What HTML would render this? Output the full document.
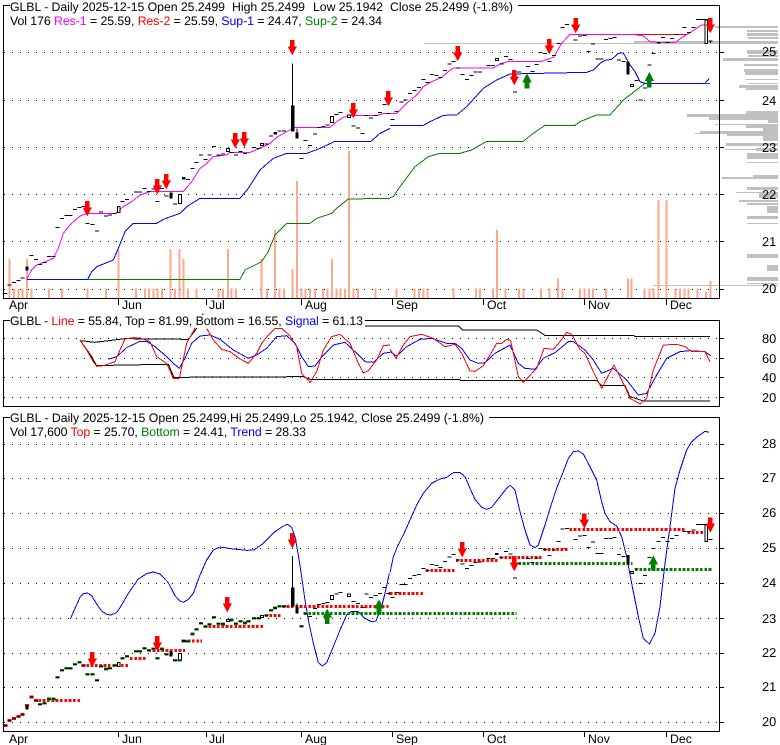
<!DOCTYPE html>
<html><head><meta charset="utf-8"><title>GLBL</title>
<style>
html,body{margin:0;padding:0;background:#fff;width:780px;height:745px;overflow:hidden}
svg{display:block}
text{font-family:"Liberation Sans",Arial,sans-serif;font-size:12.3px;fill:#000}
.a{font-size:12.8px}
.l{fill:none;stroke-width:3;stroke-linejoin:round}
</style></head><body>
<svg width="780" height="745" viewBox="0 0 780 745" shape-rendering="crispEdges">
<defs>
<polygon id="d" points="-7,0 7,0 7,19 14,19 0,46 -14,19 -7,19" fill="#f00"/>
<polygon id="u" points="0,0 14,27 7,27 7,46 -7,46 -7,27 -14,27" fill="#008000"/>
</defs>
<!-- volume profile -->
<path fill="#c0c0c0" d="M715 26H778V28H715zM747 30H778V32H747zM747 33H778V36H747zM748 37H778V39H748zM634 41H778V44H634zM424 43H634V44H424zM747 50H778V54H747zM748 55H778V57H748zM723 58H778V61H723zM744 64H778V66H744zM744 69H778V72H744zM745 72H778V75H745zM746 79H778V80H746zM748 83H778V84H748zM739 85H778V88H739zM746 88H778V90H746zM746 111H778V114H746zM687 114H778V117H687zM709 117H778V120H709zM768 120H778V123H768zM715 124H778V125H715zM746 124H778V128H746zM763 128H778V131H763zM700 131H778V134H700zM695 133H700V134H695zM727 134H778V136H727zM763 136H778V141H763zM726 143H778V146H726zM756 148H778V151H756zM725 149H756V150H725zM747 153H778V159H747zM747 162H778V163H747zM753 175H778V177H753zM722 177H778V179H722zM747 187H778V190H747zM736 192H778V193H736zM759 193H778V198H759zM739 200H778V202H739zM747 203H778V205H747zM767 206H778V213H767zM747 216H778V219H747zM747 223H778V224H747zM747 254H778V258H747zM767 265H778V271H767zM747 277H778V281H747zM747 283H778V284H747zM653 285H778V286H653z"/>
<!-- grids -->
<g stroke="#000" fill="none" stroke-width="1">
<path stroke-dasharray="1 7" d="M4 52.5H719M4 100.5H719M4 147.5H719M4 194.5H719M4 241.5H719M4 289.5H719M4 338.5H719M4 358.5H719M4 377.5H719M4 397.5H719M4 444.5H719M4 478.5H719M4 513.5H719M4 548.5H719M4 583.5H719M4 618.5H719M4 653.5H719M4 687.5H719M4 722.5H719"/>
<path d="M720 52.5h4M720 100.5h4M720 147.5h4M720 194.5h4M720 241.5h4M720 289.5h4M720 338.5h4M720 358.5h4M720 377.5h4M720 397.5h4M720 444.5h4M720 478.5h4M720 513.5h4M720 548.5h4M720 583.5h4M720 618.5h4M720 653.5h4M720 687.5h4M720 722.5h4"/>
<path d="M118.5 298v7M206.5 298v7M301.5 298v7M392.5 298v7M483.5 298v7M584.5 298v7M666.5 298v7M118.5 731v6M206.5 731v6M301.5 731v6M392.5 731v6M483.5 731v6M584.5 731v6M666.5 731v6"/>
</g>
<!-- volume bars -->
<g transform="scale(.33333)" fill="none" stroke="#ffa98c" stroke-width="6">
<path d="M29 777V894M42 865V894M55 865V894M68 865V894M81 777V894M95 865V894M147 865V894M186 865V894M263 865V894M318 865V894M356 750V894M408 865V894M435 865V894M447 865V894M460 865V894M473 865V894M486 865V894M512 747V894M525 865V894M538 747V894M551 777V894M564 865V894M590 865V894M656 865V894M669 865V894M684 747V894M695 865V894M708 865V894M785 777V894M801 865V894M825 690V894M839 865V894M852 865V894M878 807V894M891 543V894M905 865V894M917 865V894M930 865V894M945 865V894M969 865V894M983 865V894M996 777V894M1009 865V894M1022 865V894M1035 865V894M1047 453V894M1061 865V894M1074 865V894M1127 865V894"/>
</g>
<g transform="translate(390,0) scale(.33333)" fill="none" stroke="#ffa98c" stroke-width="6">
<path d="M20 865V894M74 865V894M87 865V894M100 865V894M113 865V894M191 865V894M258 865V894M270 865V894M309 865V894M321 690V894M347 865V894M387 865V894M401 865V894M453 865V894M479 865V894M504 835V894M518 865V894M570 865V894M583 865V894M597 865V894M609 865V894M648 865V894M714 835V894M725 835V894M764 865V894M778 865V894M791 865V894M806 600V894M830 600V894M857 865V894M870 865V894M883 865V894M896 865V894M923 865V894M948 875V894M962 843V894"/>
</g>
<!-- panel 1 left -->
<g transform="scale(.33333)">
<polyline class="l" stroke="#0000ff" points="81,838 263,838 275,815 290,800 340,780 355,745 375,695 400,670 470,670 490,658 540,640 560,620 600,595 720,595 745,565 780,510 820,475 860,460 920,460 960,445 1005,424 1113,424 1140,400 1170,385"/>
<polyline class="l" stroke="#008000" points="263,838 720,838 735,810 785,785 805,755 825,705 860,670 930,670 950,655 995,640 1010,625 1045,597 1170,595"/>
<polyline class="l" stroke="#ff00ff" points="81,836 95,810 110,795 130,788 160,775 175,745 190,700 210,675 240,648 260,641 345,641 370,620 395,605 420,585 450,575 550,574 575,545 600,505 620,490 640,470 680,465 690,457 750,457 780,445 810,430 830,412 860,395 885,382 990,382 1010,365 1030,352 1050,347 1130,347 1150,340 1170,340"/>
<path fill="none" stroke="#000" stroke-width="3" d="M10 880h12M23 855h12M36 847h12M49 842h12M62 834h12M89 766h12M102 778h12M114 793h12M128 787h12M141 770h12M154 770h12M167 682h12M180 655h12M193 646h12M206 646h12M219 628h12M232 622h12M245 620h12M257 670h12M272 673h12M285 693h12M297 636h12M312 648h12M324 645h12M337 640h12M362 605h12M375 598h12M402 576h12M414 576h12M428 565h12M441 574h12M454 567h12M467 604h12M480 566h12M493 588h12M519 612h12M558 538h12M571 505h12M584 487h12M597 465h12M610 478h12M623 465h12M636 440h12M650 465h12M663 462h12M689 457h12M702 465h12M716 455h12M729 460h12M756 442h12M769 445h12M794 432h12M807 408h12M833 393h12M846 393h12M899 475h12M911 422h12M924 436h12M939 402h12M951 383h12M964 380h12M977 375h12M1003 343h12M1016 338h12M1055 378h12M1068 384h12M1082 400h12M1094 347h12M1107 354h12M1121 347h12M1134 338h12M1147 313h12M1160 340h12M878 190V394M891 385V400"/>
<path fill="#000" d="M76 800h10v12h-10zM546 531h11v8h-11zM820 396h11v8h-11zM508 577h10v19h-10zM873 316h11v78h-11zM886 397h10v19h-10z"/>
<path fill="#fff" stroke="#000" stroke-width="3" d="M680 446h8v8h-8zM782 431h8v6h-8zM1043 345h8v7h-8zM353 620h7v18h-7zM536 584h8v26h-8zM992 350h8v17h-8z"/>
<use href="#d" x="262" y="603"/><use href="#d" x="472" y="537"/><use href="#d" x="499" y="522"/><use href="#d" x="706" y="399"/><use href="#d" x="733" y="396"/><use href="#d" x="877" y="120"/><use href="#d" x="1060" y="309"/><use href="#d" x="1165" y="273"/>
</g>
<!-- panel 1 right -->
<g transform="translate(390,0) scale(.33333)">
<polyline class="l" stroke="#008000" points="0,593 10,590 30,560 75,500 115,470 150,460 210,460 245,450 290,424 400,424 430,400 465,376 555,376 570,365 620,345 660,345 700,300 765,250 960,250"/>
<polyline class="l" stroke="#0000ff" points="0,376 100,376 120,365 160,346 200,345 230,320 280,265 320,240 360,222 590,217 610,210 630,190 645,181 665,178 685,160 700,159 720,195 735,215 750,245 765,250 945,250 958,235"/>
<polyline class="l" stroke="#ff00ff" points="0,340 20,340 50,310 80,285 100,260 125,245 155,232 175,215 190,204 310,204 330,192 355,184 455,184 490,172 515,130 540,103 730,103 760,108 780,125 810,128 855,128 880,110 905,95 935,75 960,75"/>
<path stroke="#f00" stroke-width="3" fill="none" d="M730 103H890"/>
<path fill="none" stroke="#000" stroke-width="3" d="M2 358h12M14 335h12M28 306h12M41 300h12M54 280h12M68 272h12M81 262h12M94 238h12M107 247h12M120 223h12M133 226h12M146 232h12M159 211h12M172 192h12M185 184h12M198 204h12M212 223h12M225 238h12M238 227h12M251 216h12M264 216h12M290 196h12M303 196h12M329 192h12M342 169h12M356 178h12M369 276h12M381 216h12M408 199h12M421 214h12M434 194h12M446 158h12M459 160h12M473 184h12M486 166h12M499 130h12M512 82h12M525 74h12M551 120h12M564 108h12M577 106h12M590 154h12M603 132h12M616 177h12M629 177h12M642 118h12M655 116h12M668 112h12M681 180h12M694 185h12M733 241h12M746 300h12M759 264h12M772 195h12M785 160h12M813 112h12M826 128h12M840 115h12M853 103h12M878 82h12M891 97h12M904 82h12M918 58H952M956 123h12M962 123v6"/>
<path fill="#000" d="M709 184h10v40h-10zM801 126h11v5h-11z"/>
<path fill="#fff" stroke="#000" stroke-width="3" d="M317 176h8v6h-8zM722 254h8v5h-8zM945 60h7v70h-7z"/>
<use href="#d" x="203" y="138"/><use href="#d" x="373" y="210"/><use href="#d" x="478" y="117"/><use href="#d" x="557" y="54"/><use href="#d" x="961" y="54"/>
<use href="#u" x="411" y="220"/><use href="#u" x="778" y="216"/>
</g>
<!-- panel 2 -->
<g transform="translate(0,300) scale(.33333)">
<polyline class="l" stroke="#000" points="240,122 285,127 375,116 565,118 590,85 610,40"/>
<polyline class="l" stroke="#000" points="240,120 275,170 290,197 372,195 505,193 522,232 910,230 930,238 1170,238"/>
<polyline class="l" stroke="#0000ff" points="325,178 350,170 380,143 420,124 440,124 465,140 500,170 520,190 538,205 555,175 575,130 600,108 630,105 660,118 700,150 745,175 770,165 800,145 830,110 860,107 885,130 905,170 925,200 945,198 970,165 1000,135 1035,127 1065,155 1095,185 1120,187 1150,160 1170,157"/>
<polyline class="l" stroke="#f00" points="240,120 260,150 280,185 290,199 310,197 345,185 360,150 375,117 400,113 420,114 450,125 470,170 500,190 520,235 538,235 560,130 585,85"/>
<polyline class="l" stroke="#f00" points="620,85 640,120 665,148 690,155 720,177 745,190 770,160 785,130 805,105 825,85 845,85 870,108 890,140 905,220 930,247 950,215 970,150 995,110 1020,103 1050,130 1075,190 1090,219 1105,212 1130,180 1150,137 1170,135"/>
<path stroke="#000" stroke-width="3" fill="none" d="M1095 78H1170"/>
</g>
<g transform="translate(390,300) scale(.33333)">
<polyline class="l" stroke="#000" points="0,78 205,78 218,90 440,90 465,106 730,106 735,109 960,109"/>
<polyline class="l" stroke="#000" points="0,238 210,238 210,241 620,241 635,257 705,257 720,290 760,303 960,303"/>
<polyline class="l" stroke="#0000ff" points="0,155 20,168 50,140 90,118 125,115 170,130 195,130 215,145 240,180 265,190 285,188 315,160 360,135 385,190 405,205 435,208 460,175 495,158 535,125 550,125 585,150 610,180 635,220 670,205 710,240 745,285 770,280 800,225 830,175 870,155 900,152 945,155 962,167"/>
<polyline class="l" stroke="#f00" points="0,147 18,175 40,135 60,110 95,103 130,115 165,140 195,133 215,160 240,213 255,214 280,197 300,165 320,130 335,130 350,118 362,122 385,230 400,247 440,205 462,145 490,148 510,125 530,97 545,103 570,148 585,160 610,215 635,265 672,195 705,260 720,295 750,312 770,295 790,210 820,135 860,133 885,140 905,155 945,155 960,185"/>
</g>
<!-- panel 3 left -->
<g transform="translate(0,430) scale(.33333)">
<polyline class="l" stroke="#0000ff" points="211,567 225,535 240,502 250,491 262,489 275,497 290,522 305,543 320,553 332,555 350,548 365,525 385,490 415,447 440,431 460,426 480,432 505,458 525,497 540,513 550,517 565,508 580,490 600,435 620,390 640,360 660,351 700,357 740,361 762,360 790,340 825,305 850,288 862,283 875,292 885,320 895,375 905,440 915,510 925,570 940,640 955,698 967,708 980,698 1000,650 1020,600 1040,555 1055,544 1075,545 1095,565 1115,575 1128,573 1145,530 1155,490 1168,430"/>
<path fill="none" stroke="#f00" stroke-width="9" stroke-dasharray="8 5" d="M115 811H243M246 706H384M390 685H438M445 661H555M550 633H606M612 589H789M795 556H843M847 529H1165M1165 490H1170"/>
<path fill="none" stroke="#008000" stroke-width="9" stroke-dasharray="8 5" d="M912 550H1170"/>
<path fill="none" stroke="#f00" stroke-width="9" d="M10 886h12M23 871h12M36 865h12M49 860h12M62 853h12M75 826h12M89 801h12M102 811h12M245 706h12"/>
<path fill="none" stroke="#008000" stroke-width="8" d="M114 823h12M128 820h12M141 807h12M154 807h12M167 742h12M180 721h12M193 715h12M206 715h12M219 703h12M232 697h12M257 733h12M272 733h12M285 751h12M297 709h12M312 717h12M324 715h12M337 706h12M362 685h12M375 679h12M402 664h12M414 664h12M428 655h12M441 661h12M454 656h12M467 685h12M480 657h12M493 673h12M519 691h12M533 690h12M545 633h12M558 634h12M571 612h12M584 598h12M597 580h12M610 590h12M623 583h12M636 562h12M650 581h12M663 582h12M678 572h12M689 570h12M702 581h12M716 574h12M729 579h12M740 574h12M756 565h12M769 565h12M794 556h12M807 541h12M819 534h12M833 529h12M846 529h12M899 589h12M911 550h12"/>
<path fill="none" stroke="#000" stroke-width="3" d="M10 886h12M23 871h12M36 865h12M49 860h12M62 853h12M89 801h12M102 811h12M114 823h12M128 820h12M141 807h12M154 807h12M167 742h12M180 721h12M193 715h12M206 715h12M219 703h12M232 697h12M245 706h12M257 733h12M272 733h12M285 751h12M297 709h12M312 717h12M324 715h12M337 706h12M362 685h12M375 679h12M402 664h12M414 664h12M428 655h12M441 661h12M454 656h12M467 685h12M480 657h12M493 673h12M519 691h12M558 634h12M571 612h12M584 598h12M597 580h12M610 590h12M623 583h12M636 562h12M650 581h12M663 582h12M689 570h12M702 581h12M716 574h12M729 579h12M740 574h12M756 565h12M769 565h12M794 556h12M807 541h12M833 529h12M846 529h12M899 589h12M911 550h12M924 560h12M939 535h12M951 523h12M964 520h12M977 517h12M1003 492h12M1016 487h12M1055 515h12M1068 521h12M1082 532h12M1094 492h12M1107 503h12M1121 496h12M1134 490h12M1147 472h12M1160 490h12M878 378V530M891 520V532"/>
<path fill="#000" d="M76 826h10v12h-10zM546 630h11v6h-11zM820 531h11v6h-11zM508 663h10v16h-10zM873 472h11v58h-11zM886 530h10v20h-10z"/>
<path fill="#fff" stroke="#000" stroke-width="3" d="M680 568h8v7h-8zM782 556h8v7h-8zM1043 492h8v7h-8zM353 697h7v13h-7zM536 671h8v19h-8zM992 496h8v12h-8z"/>
<use href="#d" x="277" y="666"/><use href="#d" x="472" y="618"/><use href="#d" x="682" y="501"/><use href="#d" x="877" y="309"/>
<use href="#u" x="982" y="536"/><use href="#u" x="1137" y="508"/>
</g>
<!-- panel 3 right -->
<g transform="translate(390,430) scale(.33333)">
<polyline class="l" stroke="#0000ff" points="0,428 10,380 22,350 40,315 60,270 80,225 100,190 125,160 150,147 170,142 190,128 210,128 225,140 240,175 255,208 275,232 290,238 305,232 330,200 350,175 360,166 375,180 390,245 405,300 420,345 435,353 445,345 465,285 485,220 500,175 520,125 535,85 550,65 565,63 580,72 600,110 620,150 635,215 645,250 660,275 680,288 695,320 710,380 725,460 745,560 760,625 778,642 795,610 810,530 825,400 840,290 855,175 870,120 890,60 905,35 925,18 945,4 958,7"/>
<path fill="none" stroke="#f00" stroke-width="9" stroke-dasharray="8 5" d="M0 490H103M108 421H195M198 391H325M330 382H456M460 358H534M538 298H890M892 307H940"/>
<path fill="none" stroke="#008000" stroke-width="9" stroke-dasharray="8 5" d="M0 550H379M385 400H728M735 418H967"/>
<path fill="none" stroke="#000" stroke-width="3" d="M2 502h12M14 487h12M28 463h12M41 463h12M54 445h12M68 437h12M81 433h12M94 415h12M107 422h12M120 403h12M133 406h12M146 412h12M159 394h12M172 381h12M185 373h12M198 390h12M212 402h12M225 415h12M238 406h12M251 398h12M264 396h12M290 386h12M303 386h12M329 382h12M342 364h12M356 372h12M369 444h12M381 400h12M408 385h12M421 398h12M434 384h12M446 356h12M459 358h12M473 376h12M486 360h12M499 334h12M512 297h12M525 296h12M551 328h12M564 318h12M577 316h12M590 352h12M603 336h12M616 370h12M629 370h12M642 325h12M655 325h12M668 322h12M681 373h12M694 380h12M733 417h12M746 460h12M759 436h12M772 382h12M785 355h12M800 334h12M813 322h12M826 334h12M840 325h12M853 316h12M878 304h12M891 304h12M904 300h12M918 284H952M956 328h12"/>
<path fill="#000" d="M315 369h11v6h-11zM709 375h10v29h-10z"/>
<path fill="#fff" stroke="#000" stroke-width="3" d="M722 425h8v5h-8zM945 285h7v49h-7z"/>
<use href="#d" x="217" y="336"/><use href="#d" x="373" y="378"/><use href="#d" x="583" y="250"/><use href="#d" x="961" y="262"/>
<use href="#u" x="790" y="376"/>
</g>
<!-- frames -->
<g fill="none" stroke="#000" stroke-width="1">
<path d="M3.5 5.5H719.5V298.5H3.5Z"/>
<path d="M3.5 320.5H719.5V406.5H3.5Z"/>
<path d="M3.5 417.5H719.5V731.5H3.5Z"/>
</g>
<rect x="10" y="0" width="508" height="13" fill="#fff"/>
<rect x="10" y="315" width="355" height="13" fill="#fff"/>
<rect x="10" y="412" width="479" height="13" fill="#fff"/>
<g text-rendering="geometricPrecision">
<text x="10" y="11" textLength="215">GLBL - Daily 2025-12-15 Open 25.2499</text>
<text x="232" y="11" textLength="73">High 25.2499</text>
<text x="313" y="11" textLength="70">Low 25.1942</text>
<text x="390" y="11" textLength="123">Close 25.2499 (-1.8%)</text>
<text x="10" y="25" textLength="372">Vol 176 <tspan fill="#ff00ff">Res-1</tspan> = 25.59, <tspan fill="#f00">Res-2</tspan> = 25.59, <tspan fill="#0000ff">Sup-1</tspan> = 24.47, <tspan fill="#008000">Sup-2</tspan> = 24.34</text>
<text x="10" y="325" textLength="353">GLBL - <tspan fill="#f00">Line</tspan> = 55.84, Top = 81.99, Bottom = 16.55, <tspan fill="#0000ff">Signal</tspan> = 61.13</text>
<text x="10" y="422" textLength="474">GLBL - Daily 2025-12-15 Open 25.2499,Hi 25.2499,Lo 25.1942, Close 25.2499 (-1.8%)</text>
<text x="10" y="436" textLength="296">Vol 17,600 <tspan fill="#f00">Top</tspan> = 25.70, <tspan fill="#008000">Bottom</tspan> = 24.41, <tspan fill="#0000ff">Trend</tspan> = 28.33</text>
<text x="9" y="309">Apr</text><text x="122" y="309">Jun</text><text x="209" y="309">Jul</text><text x="305" y="309">Aug</text><text x="396" y="309">Sep</text><text x="487" y="309">Oct</text><text x="588" y="309">Nov</text><text x="670" y="309">Dec</text>
<text x="9" y="743">Apr</text><text x="122" y="743">Jun</text><text x="209" y="743">Jul</text><text x="305" y="743">Aug</text><text x="396" y="743">Sep</text><text x="487" y="743">Oct</text><text x="588" y="743">Nov</text><text x="670" y="743">Dec</text>
<g class="a">
<text class="a" x="762" y="56">25</text><text class="a" x="762" y="105">24</text><text class="a" x="762" y="152">23</text><text class="a" x="762" y="199">22</text><text class="a" x="762" y="246">21</text><text class="a" x="762" y="293">20</text>
<text class="a" x="762" y="343">80</text><text class="a" x="762" y="363">60</text><text class="a" x="762" y="382">40</text><text class="a" x="762" y="402">20</text>
<text class="a" x="762" y="448">28</text><text class="a" x="762" y="482">27</text><text class="a" x="762" y="517">26</text><text class="a" x="762" y="552">25</text><text class="a" x="762" y="587">24</text><text class="a" x="762" y="623">23</text><text class="a" x="762" y="657">22</text><text class="a" x="762" y="691">21</text><text class="a" x="762" y="726">20</text>
</g>
</g>
</svg>
</body></html>
